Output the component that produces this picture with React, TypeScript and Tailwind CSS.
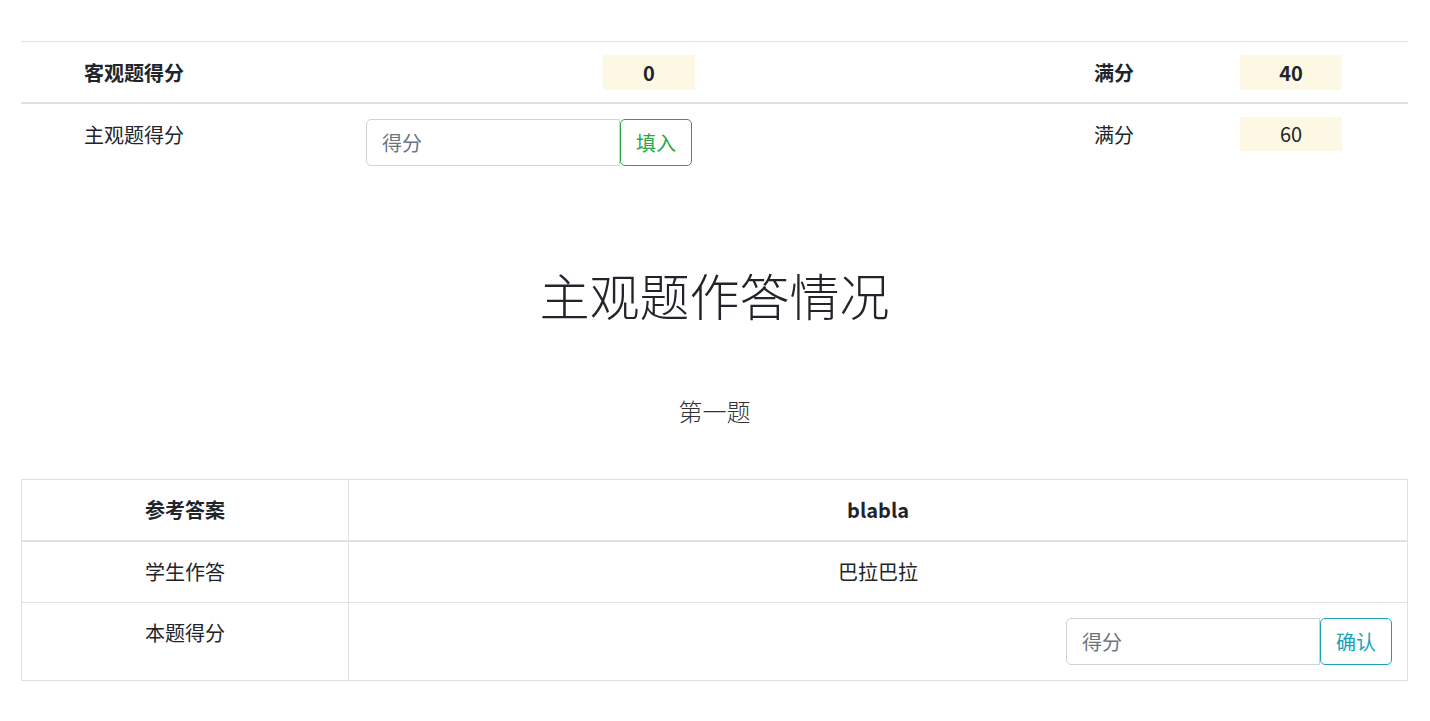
import React from "react";

const font = { fontFamily: '"Noto Sans CJK SC", "Noto Sans", sans-serif' };

function InputGroup({ btn, color }: { btn: string; color: "green" | "teal" }) {
  const btnCls =
    color === "green"
      ? "border-[#28a745] text-[#28a745]"
      : "border-[#17a2b8] text-[#17a2b8]";
  return (
    <div className="flex h-[47px]">
      <input
        placeholder="得分"
        className="w-[254px] h-[47px] border border-[#ced4da] rounded-l-[5px] px-[15px] text-[20px] leading-[30px] text-[#495057] placeholder:text-[#6c757d] outline-none bg-white"
      />
      <button
        className={`h-[47px] w-[72px] border ${btnCls} rounded-[5px] text-[20px] leading-[30px] bg-white`}
      >
        {btn}
      </button>
    </div>
  );
}

export default function App() {
  return (
    <div className="bg-white text-[#212529] text-[20px] leading-[30px] pl-[21px] pr-[22px] pt-[41px] pb-[40px] min-h-[721px]" style={font}>
      {/* top table */}
      <div className="border-t border-[#dee2e6]">
        <div className="grid grid-cols-[330px_357px_371px_146px_132px_1fr] border-b-2 border-[#dee2e6] h-[62px] items-center font-bold pt-[1px]">
          <div className="pl-[63px]">客观题得分</div>
          <div className="px-[15px]">
            <div className="ml-[237px] w-[92px] h-[35px] bg-[#fcf8e3] flex items-center justify-center">0</div>
          </div>
          <div />
          <div className="px-[15px]">满分</div>
          <div className="px-[15px]">
            <div className="w-[102px] h-[35px] bg-[#fcf8e3] flex items-center justify-center">40</div>
          </div>
          <div />
        </div>
        <div className="grid grid-cols-[330px_357px_371px_146px_132px_1fr] pt-[15px] pb-[15px] items-start">
          <div className="pl-[63px] pt-[1px]">主观题得分</div>
          <div className="px-[15px]">
            <InputGroup btn="填入" color="green" />
          </div>
          <div />
          <div className="px-[15px] pt-[1px]">满分</div>
          <div className="px-[15px] -mt-[2px]">
            <div className="w-[102px] h-[34px] bg-[#fcf8e3] flex items-center justify-center">60</div>
          </div>
          <div />
        </div>
      </div>

      <h1 className="text-center text-[50px] leading-[60px] font-light mt-[83px]">主观题作答情况</h1>
      <h3 className="text-center text-[24px] leading-[29px] font-light text-[#333] mt-[72px]">第一题</h3>

      {/* bottom table */}
      <div className="mt-[54px] border border-[#dee2e6]">
        <div className="grid grid-cols-[327px_1fr] border-b-2 border-[#dee2e6] font-bold">
          <div className="border-r border-[#dee2e6] py-[15px] text-center">参考答案</div>
          <div className="py-[15px] text-center">blabla</div>
        </div>
        <div className="grid grid-cols-[327px_1fr] border-b border-[#dee2e6]">
          <div className="border-r border-[#dee2e6] py-[15px] text-center">学生作答</div>
          <div className="py-[15px] text-center">巴拉巴拉</div>
        </div>
        <div className="grid grid-cols-[327px_1fr]">
          <div className="border-r border-[#dee2e6] py-[15px] text-center">本题得分</div>
          <div className="py-[15px] px-[15px] flex justify-end">
            <InputGroup btn="确认" color="teal" />
          </div>
        </div>
      </div>
    </div>
  );
}
